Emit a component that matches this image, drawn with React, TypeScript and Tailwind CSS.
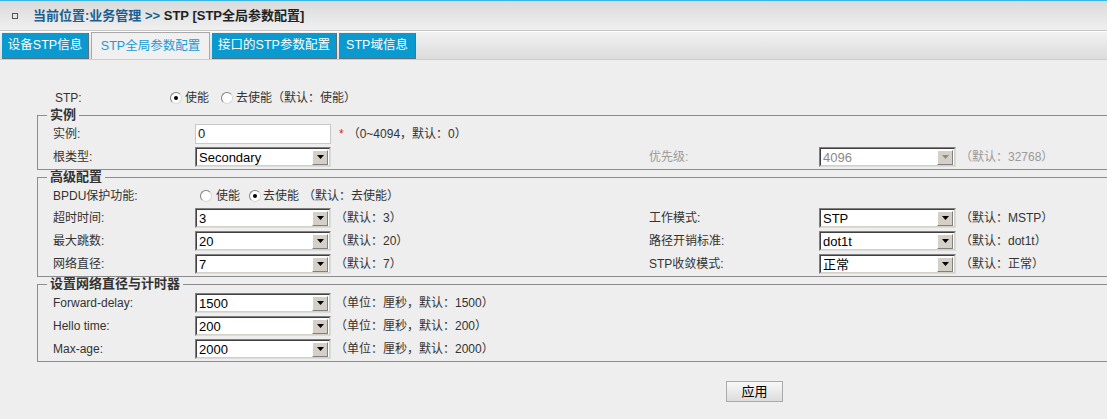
import React from "react";

const FONT = "font-['Liberation_Sans','Noto_Sans_CJK_SC',sans-serif]";

function Radio({ checked }: { checked?: boolean }) {
  return (
    <span className="w-[12px] h-[12px] rounded-full border border-t-[#808080] border-l-[#808080] border-r-[#d8d8d8] border-b-[#d8d8d8] bg-white flex items-center justify-center shrink-0">
      {checked && <span className="w-[4px] h-[4px] rounded-full bg-black" />}
    </span>
  );
}

function Select({ value, width = "w-[136px]", disabled }: { value: string; width?: string; disabled?: boolean }) {
  return (
    <div className={`${width} h-[20px] border border-t-[#808080] border-l-[#808080] border-r-[#dcdcdc] border-b-[#dcdcdc] bg-white`}>
      <div className="h-full flex items-center border border-t-[#404040] border-l-[#404040] border-r-[#d4d0c8] border-b-[#d4d0c8]">
        <span className={`flex-1 pl-[2px] text-[13px] leading-none ${disabled ? "text-[#8a8a8a]" : "text-black"}`}>{value}</span>
        <span className="w-[16px] h-[15px] mr-[1px] bg-[#d4d0c8] border border-t-white border-l-white border-r-[#808080] border-b-[#808080] flex items-center justify-center">
          <svg width="7" height="4" viewBox="0 0 7 4">
            <path d="M0 0h7L3.5 4z" fill={disabled ? "#8a8a8a" : "#000"} />
          </svg>
        </span>
      </div>
    </div>
  );
}

function Hint({ children, gray, span }: { children: React.ReactNode; gray?: boolean; span?: boolean }) {
  return (
    <span className={`pl-[4px] text-[12px] leading-[16px] ${span ? "col-span-4" : ""} ${gray ? "text-[#9a9a9a]" : "text-[#333]"}`}>
      {children}
    </span>
  );
}

function Label({ children, gray }: { children: React.ReactNode; gray?: boolean }) {
  return <span className={`text-[12px] leading-[16px] ${gray ? "text-[#9a9a9a]" : "text-[#333]"}`}>{children}</span>;
}

function Group({ title, children, firstRow = "grid-rows-[20px]" }: { title: string; children: React.ReactNode; firstRow?: string }) {
  return (
    <fieldset className="ml-[37px] -mr-[20px] border border-[#8c8c8c] pl-[15px] pt-[2px] pb-[2px]">
      <legend className="-ml-[6px] px-[3px] text-[13px] leading-[14px] font-bold text-[#333]">{title}</legend>
      <div className={`grid grid-cols-[142px_136px_318px_170px_137px_1fr] auto-rows-[20px] ${firstRow} gap-y-[3px] items-center leading-[16px]`}>
        {children}
      </div>
    </fieldset>
  );
}

export default function App() {
  const tabs = [
    { name: "设备STP信息", w: "w-[87px]" },
    { name: "STP全局参数配置", w: "w-[119px]", active: true },
    { name: "接口的STP参数配置", w: "w-[125px]" },
    { name: "STP域信息", w: "w-[77px]" },
  ];

  return (
    <div className={`w-full h-[419px] bg-[#eeeeee] overflow-hidden ${FONT}`}>
      {/* header */}
      <div className="h-[1px] bg-[#35b8e6]" />
      <div className="h-[29px] bg-gradient-to-b from-[#dadada] to-[#f0f0f0] flex items-center pl-[12px] pt-[1px]">
        <span className="w-[6px] h-[6px] border border-[#555] bg-[#e6e6e6]" />
        <span className="ml-[15px] text-[13px] font-bold">
          <span className="text-[#1b5e8f]">当前位置:业务管理 &gt;&gt;</span>
          <span className="text-[#222]"> STP [STP全局参数配置]</span>
        </span>
      </div>
      <div className="h-[1px] bg-[#c6c6c6]" />
      <div className="h-[1px] bg-white" />
      <div className="h-[28px] bg-gradient-to-b from-[#f2f2f2] to-[#dcdcdc] border-b border-[#cdcdcd] flex items-end gap-[2px] pl-[2px]">
        {tabs.map((t) =>
          t.active ? (
            <div key={t.name} className={`${t.w} h-[27px] bg-[#f0f0f0] border border-b-0 border-[#a8a8a8] flex items-center justify-center text-[12.5px] text-[#1a9ad6]`}>
              {t.name}
            </div>
          ) : (
            <div key={t.name} className={`${t.w} h-[26px] bg-[#0a9ad0] border-r border-b border-[#5f6f78] flex items-center justify-center text-[12.5px] text-white`}>
              {t.name}
            </div>
          )
        )}
      </div>

      {/* body */}
      <div className="pt-[28px]">
        <div className="h-[20px] flex items-center pl-[55px] text-[12px] text-[#333]">
          <span className="w-[115px]">STP:</span>
          <Radio checked />
          <span className="ml-[3px]">使能</span>
          <span className="ml-[12px]"><Radio /></span>
          <span className="ml-[3px]">去使能（默认：使能）</span>
        </div>

        <Group title="实例">
          <Label>实例:</Label>
          <div className="w-[136px] h-[20px] border border-[#c8c8c8] bg-white flex items-center pl-[2px] text-[13px] text-[#222]">0</div>
          <span className="col-span-4 text-[12px] text-[#333]">
            <span className="pl-[8px] text-[#e02020]">*</span>
            <span className="pl-[4px]">（0~4094，默认：0）</span>
          </span>

          <Label>根类型:</Label>
          <Select value="Secondary" />
          <span />
          <Label gray>优先级:</Label>
          <Select value="4096" width="w-[137px]" disabled />
          <Hint gray>（默认：32768）</Hint>
        </Group>

        <Group title="高级配置" firstRow="grid-rows-[19px]">
          <Label>BPDU保护功能:</Label>
          <div className="col-span-5 flex items-center pl-[5px] text-[12px] text-[#333]">
            <Radio />
            <span className="ml-[4px]">使能</span>
            <span className="ml-[9px]"><Radio checked /></span>
            <span className="ml-[2px]">去使能</span>
            <span className="ml-[4px]">（默认：去使能）</span>
          </div>

          <Label>超时时间:</Label>
          <Select value="3" />
          <Hint>（默认：3）</Hint>
          <Label>工作模式:</Label>
          <Select value="STP" width="w-[137px]" />
          <Hint>（默认：MSTP）</Hint>

          <Label>最大跳数:</Label>
          <Select value="20" />
          <Hint>（默认：20）</Hint>
          <Label>路径开销标准:</Label>
          <Select value="dot1t" width="w-[137px]" />
          <Hint>（默认：dot1t）</Hint>

          <Label>网络直径:</Label>
          <Select value="7" />
          <Hint>（默认：7）</Hint>
          <Label>STP收敛模式:</Label>
          <Select value="正常" width="w-[137px]" />
          <Hint>（默认：正常）</Hint>
        </Group>

        <Group title="设置网络直径与计时器">
          <Label>Forward-delay:</Label>
          <Select value="1500" />
          <Hint span>（单位：厘秒，默认：1500）</Hint>

          <Label>Hello time:</Label>
          <Select value="200" />
          <Hint span>（单位：厘秒，默认：200）</Hint>

          <Label>Max-age:</Label>
          <Select value="2000" />
          <Hint span>（单位：厘秒，默认：2000）</Hint>
        </Group>

        <div className="mt-[17px] pl-[726px]">
          <button className="w-[57px] h-[21px] border border-[#aaaaaa] bg-gradient-to-b from-[#f8f8f8] to-[#dcdcdc] text-[13px] text-black leading-none">
            应用
          </button>
        </div>
      </div>
    </div>
  );
}
